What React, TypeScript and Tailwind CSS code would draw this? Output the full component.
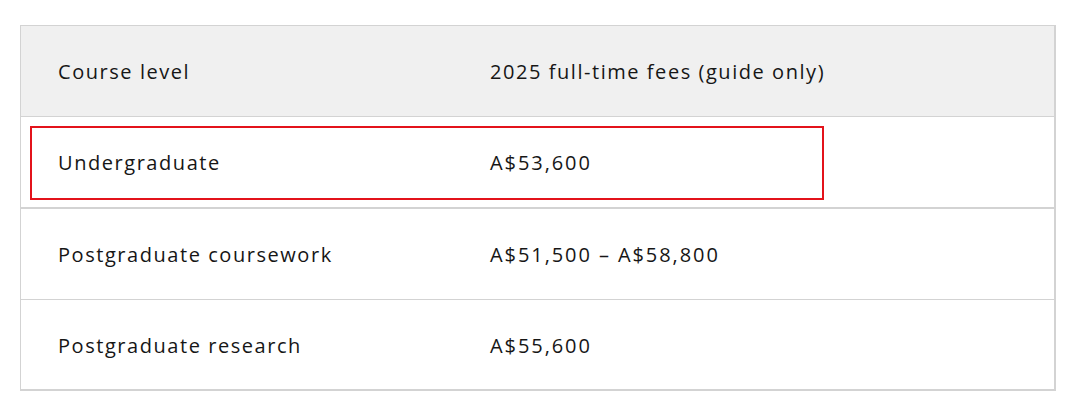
import React from "react";

const rows = [
  ["Undergraduate", "A$53,600"],
  ["Postgraduate coursework", "A$51,500 – A$58,800"],
  ["Postgraduate research", "A$55,600"],
];

export default function App() {
  return (
    <div
      className="w-[1077px] h-[404px] bg-white pt-[25px] pl-[20px]"
      style={{ fontFamily: '"Open Sans", sans-serif' }}
    >
      <div className="relative w-[1036px] border border-r-2 border-b-2 border-[#d3d3d3] text-[20px] tracking-[1.55px] text-[#161616]">
        <div className="grid grid-cols-[432px_1fr] h-[91px] items-center bg-[#f0f0f0] border-b border-[#d3d3d3] pt-[2px] font-medium">
          <div className="pl-[37px]">Course level</div>
          <div className="pl-[37px]">2025 full-time fees (guide only)</div>
        </div>
        {rows.map(([a, b], i) => (
          <div
            key={a}
            className={
              "grid grid-cols-[432px_1fr] items-center pt-[2px] " +
              (i === 0
                ? "h-[92px] border-b-2 border-[#d3d3d3]"
                : i === 1
                ? "h-[91px] border-b border-[#d3d3d3]"
                : "h-[89px]")
            }
          >
            <div className="pl-[37px]">{a}</div>
            <div className="pl-[37px] tracking-[1.92px]">{b}</div>
          </div>
        ))}
        <div className="absolute left-[9px] top-[100px] w-[794px] h-[74px] border-2 border-[#e3131b]" />
      </div>
    </div>
  );
}
